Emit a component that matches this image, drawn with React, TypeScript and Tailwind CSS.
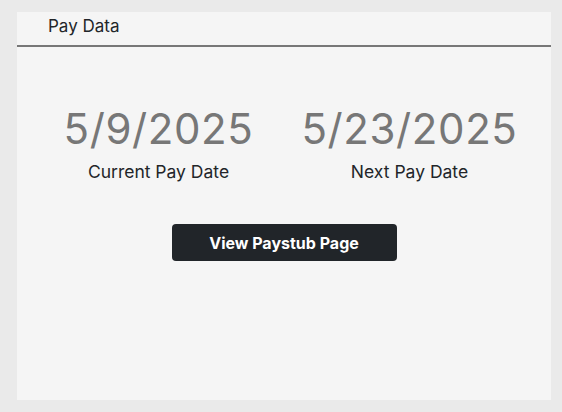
export default function App() {
  const dates = [
    { value: '5/9/2025', label: 'Current Pay Date' },
    { value: '5/23/2025', label: 'Next Pay Date' },
  ];

  return (
    <div className="w-[562px] h-[412px] bg-[#eaeaea] pt-3 pl-[17px] pr-[11px] pb-3 font-['Inter',sans-serif]">
      <div className="h-[388px] bg-[#f5f5f5] flex flex-col">
        <div className="h-[35px] border-b-2 border-[#777777] pl-[31px] pt-[2px] text-[17px] text-[#222529]">
          Pay Data
        </div>

        <div className="grid grid-cols-2 px-4 pt-[57px]">
          {dates.map((d) => (
            <div key={d.label} className="flex flex-col items-center">
              <div className="text-[42px] leading-[50px] text-[#777777] tracking-[0.6px]">{d.value}</div>
              <div className="mt-[5px] text-[17.5px] text-[#222529]">{d.label}</div>
            </div>
          ))}
        </div>

        <div className="flex justify-center mt-[39px]">
          <button className="w-[225px] h-[37px] rounded bg-[#212529] text-white font-bold text-[16px]">
            View Paystub Page
          </button>
        </div>
      </div>
    </div>
  );
}
